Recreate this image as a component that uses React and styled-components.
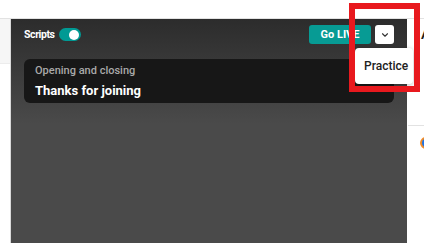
import React, { useState } from "react";
import styled, { createGlobalStyle } from "styled-components";

const GlobalStyle = createGlobalStyle`
  html, body {
    margin: 0;
    padding: 0;
    background: #fff;
    font-family: Roboto, "Liberation Sans", sans-serif;
  }
  * { box-sizing: border-box; }
`;

const App = () => {
  const [scripts, setScripts] = useState(true);

  return (
    <Page>
      <GlobalStyle />
      <TopBar />
      <Main>
        <SideRail>
          <RailBlock />
        </SideRail>

        <Stage>
          <Toolbar>
            <ScriptsToggle onClick={() => setScripts(!scripts)}>
              <ToolLabel>Scripts</ToolLabel>
              <Switch $on={scripts}>
                <Knob $on={scripts} />
              </Switch>
            </ScriptsToggle>
            <Actions>
              <LiveButton>Go LIVE</LiveButton>
              <ChevronButton aria-label="More">
                <svg width="10" height="10" viewBox="0 0 24 24" fill="none" stroke="#333" strokeWidth="2.6" strokeLinecap="round" strokeLinejoin="round">
                  <path d="M6 9l6 6 6-6" />
                </svg>
              </ChevronButton>
            </Actions>
          </Toolbar>

          <ScriptCard>
            <CardTitle>Opening and closing</CardTitle>
            <CardLine>Thanks for joining</CardLine>
          </ScriptCard>
        </Stage>

        <SidePanel>
          <PanelHead>A</PanelHead>
          <PanelRow>
            <Avatar />
          </PanelRow>
        </SidePanel>
      </Main>

      <Menu>
        <MenuItem>Practice</MenuItem>
      </Menu>
      <Highlight />
    </Page>
  );
};

export default App;

const Page = styled.div`
  position: relative;
  width: 424px;
  height: 243px;
  overflow: hidden;
  display: flex;
  flex-direction: column;
  background: #fff;
`;

const TopBar = styled.div`
  height: 19px;
  flex-shrink: 0;
  background: #fff;
  border-bottom: 1px solid #e2e2e2;
`;

const Main = styled.div`
  flex: 1;
  display: flex;
  min-height: 0;
`;

const SideRail = styled.div`
  width: 11px;
  flex-shrink: 0;
  background: #fff;
  border-right: 1px solid #d9d9d9;
`;

const RailBlock = styled.div`
  height: 45px;
  background: #f6f6f6;
  border-bottom: 1px solid #ececec;
`;

const Stage = styled.div`
  width: 396px;
  flex-shrink: 0;
  display: flex;
  flex-direction: column;
  gap: 15px;
  padding: 6px 13px 0;
  background: linear-gradient(to bottom, #2c2c2c 0, #4a4a4a 105px, #4a4a4a 100%);
`;

const Toolbar = styled.div`
  display: flex;
  align-items: center;
  justify-content: space-between;
  height: 19px;
`;

const ScriptsToggle = styled.div`
  display: flex;
  align-items: center;
  gap: 4px;
  cursor: pointer;
`;

const ToolLabel = styled.span`
  color: #fff;
  font-size: 10.5px;
  font-weight: 700;
  letter-spacing: -0.4px;
`;

const Switch = styled.div`
  width: 22px;
  height: 13px;
  border-radius: 7px;
  background: ${({ $on }) => ($on ? "#009a94" : "#777")};
  position: relative;
`;

const Knob = styled.div`
  position: absolute;
  top: 1.5px;
  left: ${({ $on }) => ($on ? "10.5px" : "1.5px")};
  width: 10px;
  height: 10px;
  border-radius: 50%;
  background: #fff;
`;

const Actions = styled.div`
  display: flex;
  align-items: center;
  gap: 4px;
`;

const LiveButton = styled.button`
  width: 62px;
  height: 19px;
  border: none;
  border-radius: 3px;
  background: #079b94;
  color: #fff;
  font-family: Roboto, "Liberation Sans", sans-serif;
  font-size: 11px;
  font-weight: 700;
  padding: 0;
  cursor: pointer;
`;

const ChevronButton = styled.button`
  width: 19px;
  height: 19px;
  border: none;
  border-radius: 3px;
  background: #fff;
  padding: 0;
  display: flex;
  align-items: center;
  justify-content: center;
  cursor: pointer;
`;

const ScriptCard = styled.div`
  height: 44px;
  border-radius: 6px;
  background: #171717;
  padding: 5px 11px 0;
  display: flex;
  flex-direction: column;
  gap: 5px;
`;

const CardTitle = styled.div`
  color: #a9a9a9;
  font-size: 11px;
  font-weight: 500;
  line-height: 14px;
`;

const CardLine = styled.div`
  color: #fff;
  font-size: 13px;
  font-weight: 700;
  line-height: 16px;
`;

const SidePanel = styled.div`
  flex: 1;
  background: #fff;
  overflow: hidden;
  padding-left: 14px;
  display: flex;
  flex-direction: column;
`;

const PanelHead = styled.div`
  height: 106px;
  padding-top: 8px;
  font-size: 13px;
  font-weight: 700;
  color: #222;
`;

const PanelRow = styled.div`
  border-top: 1px solid #e2e2e2;
  margin-left: -13px;
  padding: 11px 0 0 12px;
`;

const Avatar = styled.div`
  width: 12px;
  height: 12px;
  border-radius: 50%;
  background: #1a73e8;
  border: 2px solid #f28c28;
`;

const Menu = styled.div`
  position: absolute;
  left: 355px;
  top: 48px;
  width: 58px;
  height: 36px;
  background: #fff;
  border-radius: 4px;
  box-shadow: 0 1px 4px rgba(0, 0, 0, 0.25);
  display: flex;
  align-items: center;
  padding-left: 9px;
`;

const MenuItem = styled.div`
  color: #222;
  font-size: 12px;
  font-weight: 500;
`;

const Highlight = styled.div`
  position: absolute;
  left: 349px;
  top: 3px;
  width: 71px;
  height: 89px;
  border: 6px solid #e8191e;
  pointer-events: none;
`;
